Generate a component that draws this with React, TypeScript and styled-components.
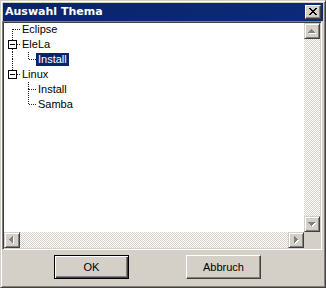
import React from 'react';
import styled, { createGlobalStyle, css } from 'styled-components';

const GlobalStyle = createGlobalStyle`
  html, body {
    margin: 0;
    padding: 0;
    background: #d4d0c8;
  }
  body {
    font-family: "Liberation Sans", Arial, sans-serif;
    font-size: 11px;
  }
`;

interface TreeNode {
    label: string;
    depth: number;
    // gutter cells, one per level
    cells: CellKind[];
    selected?: boolean;
}

type CellKind = 'first' | 'midOpen' | 'lastOpen' | 'pipe' | 'blank' | 'tee' | 'elbow';

const nodes: TreeNode[] = [
    { label: 'Eclipse', depth: 0, cells: ['first'] },
    { label: 'EleLa', depth: 0, cells: ['midOpen'] },
    { label: 'Install', depth: 1, cells: ['pipe', 'elbow'], selected: true },
    { label: 'Linux', depth: 0, cells: ['lastOpen'] },
    { label: 'Install', depth: 1, cells: ['blank', 'tee'] },
    { label: 'Samba', depth: 1, cells: ['blank', 'elbow'] },
];

const LINE = '#202020';

function Connector({ kind }: { kind: CellKind }) {
    const dots = { stroke: LINE, strokeWidth: 1, strokeDasharray: '1 1', shapeRendering: 'crispEdges' as const };
    const hasBox = kind === 'midOpen' || kind === 'lastOpen';
    const up = kind === 'midOpen' || kind === 'lastOpen' || kind === 'pipe' || kind === 'tee' || kind === 'elbow';
    const down = kind === 'first' || kind === 'midOpen' || kind === 'pipe' || kind === 'tee';
    const right = kind !== 'pipe' && kind !== 'blank';

    return (
        <svg width="16" height="15" viewBox="0 0 16 15">
            {up && <line x1="8.5" y1="0" x2="8.5" y2={hasBox ? 3 : 8} {...dots} />}
            {down && <line x1="8.5" y1={hasBox ? 12 : 7} x2="8.5" y2="15" {...dots} />}
            {right && <line x1={hasBox ? 13 : 9} y1="7.5" x2="16" y2="7.5" {...dots} />}
            {hasBox && (
                <g shapeRendering="crispEdges">
                    <rect x="4.5" y="3.5" width="8" height="8" fill="#fff" stroke="#000" />
                    <line x1="6" y1="7.5" x2="11" y2="7.5" stroke="#000" />
                </g>
            )}
        </svg>
    );
}

type Dir = 'up' | 'down' | 'left' | 'right';

function Arrow({ dir }: { dir: Dir }) {
    // classic 7x4 arrow, built row by row
    const rects: { x: number; y: number; w: number; h: number }[] = [];
    for (let i = 0; i < 4; i++) {
        const span = 2 * i + 1;
        if (dir === 'up') rects.push({ x: 7 - i, y: 6 + i, w: span, h: 1 });
        if (dir === 'down') rects.push({ x: 7 - i, y: 9 - i, w: span, h: 1 });
        if (dir === 'left') rects.push({ x: 5 + i, y: 7 - i, w: 1, h: span });
        if (dir === 'right') rects.push({ x: 9 - i, y: 7 - i, w: 1, h: span });
    }
    return (
        <svg width="14" height="14" viewBox="0 0 14 14" shapeRendering="crispEdges">
            {rects.map((r, i) => (
                <rect key={'s' + i} x={r.x} y={r.y} width={r.w} height={r.h} fill="#fff" />
            ))}
            {rects.map((r, i) => (
                <rect key={'a' + i} x={r.x - 1} y={r.y - 1} width={r.w} height={r.h} fill="#808080" />
            ))}
        </svg>
    );
}

export default function App() {
    return (
        <>
            <GlobalStyle />
            <Window>
                <TitleBar>
                    <Caption>Auswahl Thema</Caption>
                    <CloseButton>
                        <svg width="8" height="7" viewBox="0 0 8 7" shapeRendering="crispEdges">
                            <path d="M0 0h2v1h-2z M6 0h2v1h-2z M1 1h2v1h-2z M5 1h2v1h-2z M2 2h4v1h-4z M3 3h2v1h-2z M2 4h4v1h-4z M1 5h2v1h-2z M5 5h2v1h-2z M0 6h2v1h-2z M6 6h2v1h-2z" fill="#000" />
                        </svg>
                    </CloseButton>
                </TitleBar>

                <TreeFrame>
                    <TreeList>
                        {nodes.map((n, i) => (
                            <TreeRow key={i}>
                                {n.cells.map((c, j) => (
                                    <Connector key={j} kind={c} />
                                ))}
                                <Label $selected={n.selected}>{n.label}</Label>
                            </TreeRow>
                        ))}
                    </TreeList>
                    <VScroll>
                        <ScrollButton><Arrow dir="up" /></ScrollButton>
                        <Track />
                        <ScrollButton><Arrow dir="down" /></ScrollButton>
                    </VScroll>
                    <HScroll>
                        <ScrollButton><Arrow dir="left" /></ScrollButton>
                        <Track />
                        <ScrollButton><Arrow dir="right" /></ScrollButton>
                    </HScroll>
                    <Corner />
                </TreeFrame>

                <ButtonRow>
                    <PushButton $default>OK</PushButton>
                    <PushButton>Abbruch</PushButton>
                </ButtonRow>
            </Window>
        </>
    );
}

const Window = styled.div`
    width: 326px;
    height: 288px;
    box-sizing: border-box;
    background: #d4d0c8;
    border: 1px solid;
    border-color: #d4d0c8 #404040 #404040 #d4d0c8;
    box-shadow: inset 1px 1px #fff, inset -1px -1px #808080;
    padding: 1px;
    display: flex;
    flex-direction: column;
`;

const TitleBar = styled.div`
    height: 18px;
    margin: 1px 1px 0;
    padding: 0 2px;
    background: linear-gradient(to right, #0a246a, #0c2a78);
    display: flex;
    align-items: center;
    justify-content: space-between;
`;

const Caption = styled.span`
    color: #fff;
    font-family: "DejaVu Sans", Verdana, sans-serif;
    font-weight: bold;
    font-size: 11px;
    line-height: 18px;
`;

const CloseButton = styled.div`
    width: 16px;
    height: 14px;
    box-sizing: border-box;
    background: #d4d0c8;
    border: 1px solid;
    border-color: #fff #404040 #404040 #fff;
    box-shadow: inset -1px -1px #808080;
    display: flex;
    align-items: center;
    justify-content: center;
    padding: 0 1px 1px 0;
`;

const TreeFrame = styled.div`
    width: 320px;
    height: 229px;
    box-sizing: border-box;
    border: 1px solid;
    border-color: #808080 #fff #fff #808080;
    box-shadow: inset 1px 1px #404040, inset -1px -1px #d4d0c8;
    padding: 1px;
    background: #fff;
    display: grid;
    grid-template-columns: 1fr 16px;
    grid-template-rows: 1fr 16px;
`;

const TreeList = styled.div`
    overflow: hidden;
    margin-top: -1px;
    display: flex;
    flex-direction: column;
`;

const TreeRow = styled.div`
    height: 15px;
    display: flex;
    align-items: center;

    svg {
        flex: none;
        display: block;
    }
`;

const Label = styled.span<{ $selected?: boolean }>`
    height: 13px;
    line-height: 13px;
    padding: 0 2px;
    color: #000;
    white-space: nowrap;
    ${p => p.$selected && css`
        background: #0a246a;
        color: #fff;
    `}
`;

const VScroll = styled.div`
    display: flex;
    flex-direction: column;
`;

const HScroll = styled.div`
    display: flex;
`;

const ScrollButton = styled.div`
    flex: none;
    width: 16px;
    height: 16px;
    box-sizing: border-box;
    background: #d4d0c8;
    border: 1px solid;
    border-color: #d4d0c8 #404040 #404040 #d4d0c8;
    box-shadow: inset 1px 1px #fff, inset -1px -1px #808080;

    svg {
        display: block;
    }
`;

const Track = styled.div`
    flex: 1;
    background-color: #d4d0c8;
    background-image: conic-gradient(#fff 25%, transparent 0 50%, #fff 0 75%, transparent 0);
    background-size: 2px 2px;
`;

const Corner = styled.div`
    background: #d4d0c8;
`;

const ButtonRow = styled.div`
    display: flex;
    gap: 57px;
    padding: 5px 0 0 52px;
`;

const PushButton = styled.button<{ $default?: boolean }>`
    width: 75px;
    height: 24px;
    box-sizing: border-box;
    padding: 0;
    margin: 0;
    background: #d4d0c8;
    font-family: "Liberation Sans", Arial, sans-serif;
    font-size: 11px;
    color: #000;
    border: 1px solid;
    border-color: #fff #404040 #404040 #fff;
    box-shadow: inset -1px -1px #808080;
    ${p => p.$default && css`
        border-color: #000;
        box-shadow: inset 1px 1px #fff, inset -1px -1px #404040, inset -2px -2px #808080;
    `}
`;
